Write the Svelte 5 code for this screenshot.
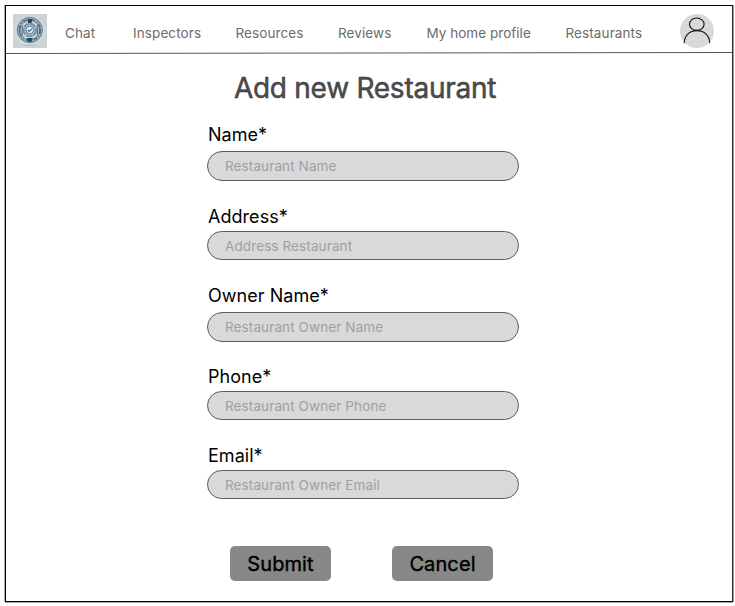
<script>
  const links = ['Chat', 'Inspectors', 'Resources', 'Reviews', 'My home profile', 'Restaurants'];
  const fields = [
    { id: 'name', label: 'Name*', hint: 'Restaurant Name' },
    { id: 'address', label: 'Address*', hint: 'Address Restaurant' },
    { id: 'owner', label: 'Owner Name*', hint: 'Restaurant Owner Name' },
    { id: 'phone', label: 'Phone*', hint: 'Restaurant Owner Phone' },
    { id: 'email', label: 'Email*', hint: 'Restaurant Owner Email' }
  ];
</script>

<div class="page">
  <div class="frame">
    <header>
      <svg class="logo" viewBox="0 0 34 34" aria-label="Logo">
        <defs>
          <radialGradient id="backdrop">
            <stop offset="0" stop-color="#e8edef" />
            <stop offset="1" stop-color="#ccd3d6" />
          </radialGradient>
        </defs>
        <rect width="34" height="34" fill="url(#backdrop)" />
        <ellipse cx="17" cy="31.4" rx="8" ry=".7" fill="#b4c1c8" />
        <circle cx="16.8" cy="16" r="12.6" fill="#a3b8c3" stroke="#587586" stroke-width=".9" />
        <circle cx="16.8" cy="16" r="10.4" fill="none" stroke="#557688" stroke-width="1.8" stroke-dasharray="4 1.6 1.5 1.2" />
        <circle cx="16.8" cy="16" r="8" fill="none" stroke="#d5e1e6" stroke-width="1.1" />
        <circle cx="16.8" cy="16" r="6.3" fill="none" stroke="#6d8b9a" stroke-width="1.4" stroke-dasharray="6 1.3" />
        <path d="M14.3 5h5l-.8 4h-3.4zM13.8 24h6l-1 3.8h-4z" fill="#1e465d" />
        <path d="M6.8 12v8M9.2 11v10M24.4 11v10M26.8 12v8" stroke="#3d6074" stroke-width=".9" />
        <circle cx="16.8" cy="16" r="3.8" fill="#e2ecef" stroke="#58798a" stroke-width=".9" />
        <path d="m14.9 16 1.5 1.5 2.6-3" fill="none" stroke="#365c71" stroke-width="1.1" />
      </svg>
      <nav>
        {#each links as link}
          <span>{link}</span>
        {/each}
      </nav>
      <svg class="avatar" viewBox="0 0 34 34" aria-label="Profile">
        <circle cx="17" cy="17" r="17" fill="#d9d9d9" />
        <ellipse cx="16.8" cy="10.2" rx="7.3" ry="6.2" />
        <path d="M4.2 29.2C4.2 21.6 9.5 16.6 16.9 16.6S29.7 21.6 29.7 29.2" />
      </svg>
    </header>
    <svg class="rule" viewBox="0 0 726 2" preserveAspectRatio="none">
      <path d="M0 1.5 726 .5" />
    </svg>
    <main>
      <h1>Add new Restaurant</h1>
      <form>
        {#each fields as field}
          <div class="field {field.id}">
            <label for={field.id}>{field.label}</label>
            <input id={field.id} placeholder={field.hint} />
          </div>
        {/each}
        <div class="actions">
          <button type="button">Submit</button>
          <button type="button">Cancel</button>
        </div>
      </form>
    </main>
  </div>
</div>

<style>
  :global(body) {
    background: #fff;
  }
  .page {
    box-sizing: border-box;
    width: 735px;
    height: 606px;
    padding: 5px 2px 4px 5px;
    font-family: Inter, 'Liberation Sans', sans-serif;
  }
  .frame {
    box-sizing: border-box;
    width: 728px;
    height: 597px;
    border: 1px solid #000;
    border-right-color: #333;
    box-shadow: -1px 0 #aaa, 1px 0 #999, 0 1px #aaa;
  }
  header {
    display: flex;
    height: 46px;
  }
  .logo {
    width: 34px;
    height: 34px;
    margin: 8px 0 0 7px;
  }
  nav {
    display: grid;
    grid-template-columns: 68px 102.5px 102.5px 88.5px 139px 114px;
    margin-left: 18px;
    color: #6c6c6c;
    font-size: 13.5px;
    letter-spacing: 0.1px;
    line-height: 20px;
    padding-top: 17px;
    white-space: nowrap;
  }
  nav span:nth-child(5) {
    letter-spacing: 0.03px;
  }
  .avatar {
    width: 34px;
    height: 34px;
    margin-top: 8px;
    fill: none;
    stroke: #111;
    stroke-width: 1.1;
  }
  .avatar circle {
    stroke: none;
  }
  .rule {
    display: block;
    width: 726px;
    height: 2px;
    stroke: #555;
    stroke-width: 1;
  }
  h1 {
    margin: 16px 0 0 1px;
    width: 716px;
    font-size: 28px;
    font-weight: 400;
    letter-spacing: -0.26px;
    line-height: 36px;
    text-align: center;
    color: #4c4c4c;
    -webkit-text-stroke: 0.5px #383838;
  }
  form {
    width: 312px;
    margin-left: 201px;
    padding-top: 17px;
  }
  .field {
    display: flex;
    flex-direction: column;
    height: 80px;
    gap: 4px;
  }
  .name {
    height: 82px;
  }
  .address {
    height: 79px;
  }
  .owner {
    height: 81px;
  }
  .phone {
    height: 79px;
  }
  .address,
  .phone,
  .email {
    gap: 2px;
  }
  label {
    padding-left: 1px;
    font-size: 18px;
    letter-spacing: 0.04px;
    line-height: 24px;
    color: #000;
  }
  input {
    box-sizing: border-box;
    width: 312px;
    height: 30px;
    padding: 0 17px;
    border: 1px solid #5c5c5c;
    border-radius: 15px;
    background: #d9d9d9;
    font: 13.5px Inter, 'Liberation Sans', sans-serif;
    letter-spacing: 0.11px;
  }
  .address input,
  .phone input,
  .email input {
    height: 29px;
  }
  input::placeholder {
    color: #a0a0a0;
    opacity: 1;
  }
  .actions {
    display: flex;
    gap: 61px;
    margin: 22px 0 0 23px;
  }
  button {
    width: 101px;
    height: 35px;
    padding: 0;
    border: 0;
    border-radius: 5px;
    background: #888;
    color: #000;
    font: 20px Inter, 'Liberation Sans', sans-serif;
    letter-spacing: 0.1px;
    -webkit-text-stroke: 0.4px #000;
  }
</style>
